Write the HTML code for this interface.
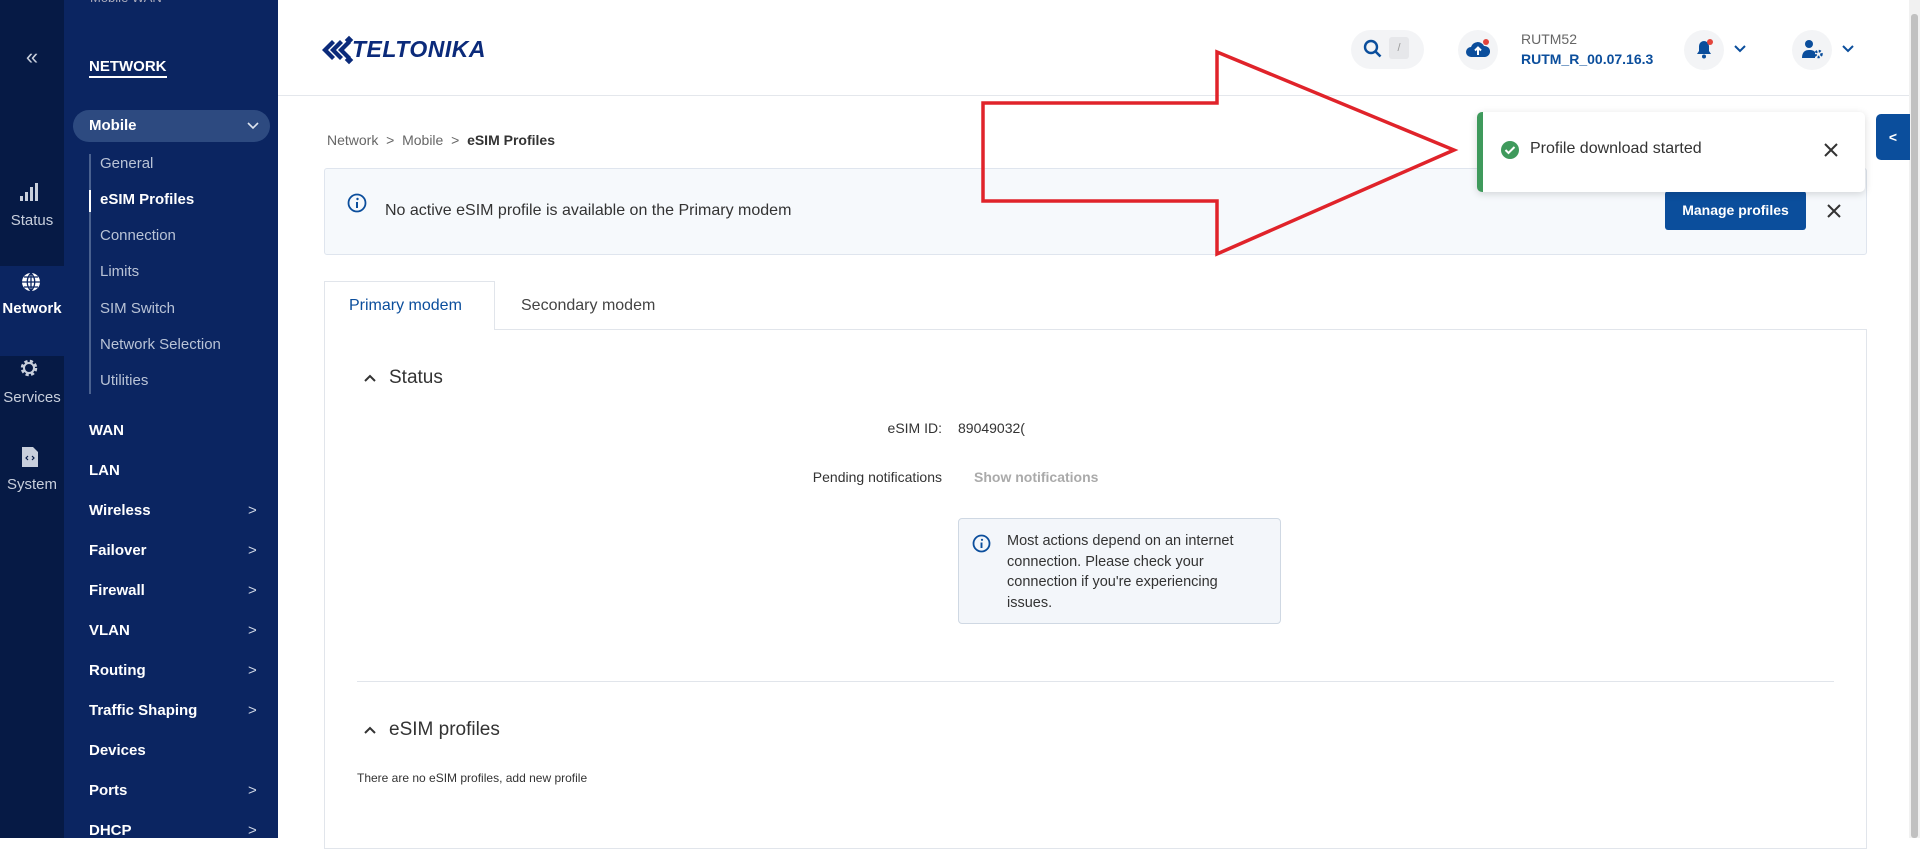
<!DOCTYPE html>
<html><head><meta charset="utf-8"><style>
*{margin:0;padding:0;box-sizing:border-box}
body{width:1920px;height:838px;overflow:hidden;background:#fff;font-family:"Liberation Sans",sans-serif;position:relative;color:#333}
.a{position:absolute;white-space:nowrap}
#rail{left:0;top:0;width:64px;height:838px;background:#061a45}
#panel{left:64px;top:0;width:214px;height:838px;background:#0b2561}
.rl{color:#c8cfdc;font-size:15px;width:64px;text-align:center;left:0}
.nv{left:89px;color:#fff;font-size:15px;font-weight:bold}
.sb{left:100px;color:#b9c3d6;font-size:15px}
.ch{left:248px;color:#cfd6e4;font-size:15px}
</style></head><body>
<div class="a" id="rail"></div>
<div class="a" style="left:0;top:266px;width:64px;height:90px;background:#0b2561"></div>
<div class="a" id="panel"></div>
<div class="a" style="left:90px;top:-10px;color:#aab;font-size:13px">Mobile WAN</div>
<div class="a rl" style="top:44px;font-size:22px;color:#c8cfdc">«</div>
<div class="a" style="left:89px;top:58px;color:#fff;font-size:15px;font-weight:bold;border-bottom:2px solid #fff;padding-bottom:1px">NETWORK</div>
<div class="a" style="left:73px;top:110px;width:197px;height:32px;border-radius:16px;background:#2d4a80"></div>
<div class="a nv" style="top:117px">Mobile</div>
<svg class="a" style="left:246px;top:121px" width="14" height="10"><path d="M2 2l5 5 5-5" stroke="#dfe5ef" stroke-width="1.6" fill="none"/></svg>
<div class="a" style="left:89px;top:154px;width:2px;height:240px;background:#4a618f"></div>
<div class="a" style="left:89px;top:190px;width:2px;height:22px;background:#fff"></div>
<div class="a sb" style="top:155px">General</div>
<div class="a sb" style="top:191px;color:#fff;font-weight:bold">eSIM Profiles</div>
<div class="a sb" style="top:227px">Connection</div>
<div class="a sb" style="top:263px">Limits</div>
<div class="a sb" style="top:300px">SIM Switch</div>
<div class="a sb" style="top:336px">Network Selection</div>
<div class="a sb" style="top:372px">Utilities</div>
<div class="a nv" style="top:422px">WAN</div>
<div class="a nv" style="top:462px">LAN</div>
<div class="a nv" style="top:502px">Wireless</div><div class="a ch" style="top:502px">&gt;</div>
<div class="a nv" style="top:542px">Failover</div><div class="a ch" style="top:542px">&gt;</div>
<div class="a nv" style="top:582px">Firewall</div><div class="a ch" style="top:582px">&gt;</div>
<div class="a nv" style="top:622px">VLAN</div><div class="a ch" style="top:622px">&gt;</div>
<div class="a nv" style="top:662px">Routing</div><div class="a ch" style="top:662px">&gt;</div>
<div class="a nv" style="top:702px">Traffic Shaping</div><div class="a ch" style="top:702px">&gt;</div>
<div class="a nv" style="top:742px">Devices</div>
<div class="a nv" style="top:782px">Ports</div><div class="a ch" style="top:782px">&gt;</div>
<div class="a nv" style="top:822px">DHCP</div><div class="a ch" style="top:822px">&gt;</div>
<!-- rail icons -->
<svg class="a" style="left:18px;top:182px" width="22" height="20"><rect x="2" y="14" width="3" height="5" fill="#c8cfdc"/><rect x="7" y="10" width="3" height="9" fill="#c8cfdc"/><rect x="12" y="5" width="3" height="14" fill="#c8cfdc"/><rect x="17" y="1" width="3" height="18" fill="#c8cfdc"/></svg>
<div class="a rl" style="top:212px">Status</div>
<svg class="a" style="left:20px;top:271px" width="22" height="22"><circle cx="11" cy="11" r="9" fill="#fff"/><path d="M2 11h18M11 2v18M4 6h14M4 16h14M11 2c-5 5-5 13 0 18M11 2c5 5 5 13 0 18" stroke="#0b2561" stroke-width="1.3" fill="none"/></svg>
<div class="a rl" style="top:300px;color:#fff;font-weight:bold">Network</div>
<svg class="a" style="left:18px;top:357px" width="22" height="22"><circle cx="11" cy="11" r="6.5" fill="none" stroke="#c8cfdc" stroke-width="3.5" stroke-dasharray="3 2.2"/><circle cx="11" cy="11" r="5" fill="none" stroke="#c8cfdc" stroke-width="2"/></svg>
<div class="a rl" style="top:389px">Services</div>
<svg class="a" style="left:21px;top:446px" width="18" height="22"><path d="M1 1h11l5 5v15H1z" fill="#c8cfdc"/><path d="M7 10l-2 2 2 2M11 10l2 2-2 2" stroke="#061a45" stroke-width="1.2" fill="none"/></svg>
<div class="a rl" style="top:476px">System</div>
<!-- header -->
<div class="a" style="left:278px;top:95px;width:1631px;height:1px;background:#e4e7ec"></div>
<svg class="a" style="left:320px;top:34px" width="60" height="32"><g fill="#0b2a7a"><path d="M2 16l10-10 3 3-7 7 7 7-3 3z"/><path d="M10 16l10-10 3 3-7 7 7 7-3 3z"/><path d="M18 16l10-10 3 3-7 7 7 7-3 3z"/><rect x="26" y="3" width="6" height="6" transform="rotate(45 29 6)"/><rect x="26" y="23" width="6" height="6" transform="rotate(45 29 26)"/></g></svg>
<div class="a" style="left:352px;top:36px;font-size:23px;font-weight:bold;font-style:italic;color:#0b2a7a;letter-spacing:0.5px">TELTONIKA</div>
<div class="a" style="left:1351px;top:30px;width:73px;height:39px;border-radius:20px;background:#f3f4f6"></div>
<svg class="a" style="left:1363px;top:39px" width="20" height="20"><circle cx="8" cy="8" r="6" stroke="#0b4e9c" stroke-width="2.4" fill="none"/><path d="M12.5 12.5l5 5" stroke="#0b4e9c" stroke-width="2.6"/></svg>
<div class="a" style="left:1389px;top:37px;width:20px;height:22px;background:#e6e7ea;border-radius:3px;color:#999;font-size:11px;text-align:center;line-height:22px">/</div>
<div class="a" style="left:1458px;top:30px;width:40px;height:40px;border-radius:20px;background:#f3f4f6"></div>
<svg class="a" style="left:1465px;top:38px" width="26" height="22"><path d="M6 19a5 5 0 010-10 7 7 0 0113-1 5 5 0 011 11z" fill="#0b4e9c"/><path d="M13 17v-7M10 12.5l3-3 3 3" stroke="#fff" stroke-width="2" fill="none"/><circle cx="21" cy="4" r="3" fill="#e2453c"/></svg>
<div class="a" style="left:1521px;top:31px;font-size:14px;color:#666">RUTM52</div>
<div class="a" style="left:1521px;top:51px;font-size:14px;color:#0b4e9c;font-weight:bold">RUTM_R_00.07.16.3</div>
<div class="a" style="left:1684px;top:30px;width:40px;height:40px;border-radius:20px;background:#f3f4f6"></div>
<svg class="a" style="left:1693px;top:37px" width="22" height="24"><path d="M4 17h14l-2-3V9a5 5 0 00-10 0v5z" fill="#0b4e9c"/><circle cx="11" cy="19.5" r="2" fill="#0b4e9c"/><circle cx="17" cy="5" r="3" fill="#e2453c"/></svg>
<svg class="a" style="left:1733px;top:44px" width="14" height="10"><path d="M2 2l5 5 5-5" stroke="#0b4e9c" stroke-width="2" fill="none"/></svg>
<div class="a" style="left:1792px;top:30px;width:40px;height:40px;border-radius:20px;background:#f3f4f6"></div>
<svg class="a" style="left:1801px;top:39px" width="24" height="22"><circle cx="8" cy="5" r="4" fill="#0b4e9c"/><path d="M1 19c0-6 3-8 7-8s5 1 6 2v6z" fill="#0b4e9c"/><circle cx="17.5" cy="15" r="3" fill="none" stroke="#0b4e9c" stroke-width="2.5" stroke-dasharray="2 1.5"/></svg>
<svg class="a" style="left:1841px;top:44px" width="14" height="10"><path d="M2 2l5 5 5-5" stroke="#0b4e9c" stroke-width="2" fill="none"/></svg>
<div class="a" style="left:1909px;top:0;width:11px;height:838px;background:#f1f1f1"></div>
<div class="a" style="left:1911px;top:14px;width:7px;height:824px;background:#c1c1c1;border-radius:3px"></div>
<!-- breadcrumb -->
<div class="a" style="left:327px;top:132px;font-size:14px;color:#666">Network &nbsp;&gt;&nbsp; Mobile &nbsp;&gt;&nbsp; <b style="color:#333">eSIM Profiles</b></div>
<!-- alert -->
<div class="a" style="left:324px;top:168px;width:1543px;height:87px;background:#f6f9fc;border:1px solid #dfe5ee;border-radius:3px"></div>
<svg class="a" style="left:347px;top:193px" width="20" height="20"><circle cx="10" cy="10" r="8.5" stroke="#0b4e9c" stroke-width="1.8" fill="none"/><circle cx="10.5" cy="6" r="1.2" fill="#0b4e9c"/><path d="M10 9v6" stroke="#0b4e9c" stroke-width="2"/></svg>
<div class="a" style="left:385px;top:202px;font-size:16px;color:#333">No active eSIM profile is available on the Primary modem</div>
<div class="a" style="left:1665px;top:191px;width:141px;height:39px;background:#0b4e9c;border-radius:3px;color:#fff;font-size:14px;font-weight:bold;text-align:center;line-height:39px">Manage profiles</div>
<svg class="a" style="left:1826px;top:203px" width="16" height="16"><path d="M2 2l12 12M14 2L2 14" stroke="#333" stroke-width="2"/></svg>
<!-- side tab -->
<div class="a" style="left:1876px;top:114px;width:34px;height:46px;background:#0b4e9c;border-radius:5px 0 0 5px;color:#fff;font-size:14px;font-weight:bold;line-height:46px;text-align:center">&lt;</div>
<!-- toast -->
<div class="a" style="left:1477px;top:112px;width:388px;height:80px;background:#fff;border-radius:5px;box-shadow:0 2px 8px rgba(0,0,0,.15);border-left:6px solid #3f9a5c"></div>
<svg class="a" style="left:1500px;top:140px" width="20" height="20"><circle cx="10" cy="10" r="9" fill="#3f9a5c"/><path d="M5.5 10l3 3 6-6" stroke="#fff" stroke-width="2" fill="none"/></svg>
<div class="a" style="left:1530px;top:140px;font-size:16px;color:#333">Profile download started</div>
<svg class="a" style="left:1823px;top:142px" width="16" height="16"><path d="M2 2l12 12M14 2L2 14" stroke="#333" stroke-width="2"/></svg>
<!-- tabs -->
<div class="a" style="left:324px;top:329px;width:1543px;height:520px;border:1px solid #e1e5eb"></div>
<div class="a" style="left:324px;top:281px;width:171px;height:49px;background:#fff;border:1px solid #e1e5eb;border-bottom:none"></div>
<div class="a" style="left:349px;top:297px;font-size:16px;color:#0b4e9c">Primary modem</div>
<div class="a" style="left:521px;top:297px;font-size:16px;color:#444">Secondary modem</div>
<svg class="a" style="left:363px;top:373px" width="14" height="10"><path d="M2 8l5-5 5 5" stroke="#333" stroke-width="2" fill="none"/></svg>
<div class="a" style="left:389px;top:367px;font-size:19px;color:#333">Status</div>
<div class="a" style="left:800px;top:420px;width:142px;text-align:right;font-size:14px;color:#333">eSIM ID:</div>
<div class="a" style="left:958px;top:420px;font-size:14px;color:#333">89049032(</div>
<div class="a" style="left:700px;top:469px;width:242px;text-align:right;font-size:14px;color:#333">Pending notifications</div>
<div class="a" style="left:974px;top:469px;font-size:14px;color:#aaa;font-weight:bold">Show notifications</div>
<div class="a" style="left:958px;top:518px;width:323px;height:106px;background:#f3f6fa;border:1px solid #cfd8e3;border-radius:4px"></div>
<svg class="a" style="left:972px;top:534px" width="19" height="19"><circle cx="9.5" cy="9.5" r="8" stroke="#0b4e9c" stroke-width="1.8" fill="none"/><circle cx="10" cy="5.8" r="1.1" fill="#0b4e9c"/><path d="M9.5 8.5v5.5" stroke="#0b4e9c" stroke-width="1.9"/></svg>
<div class="a" style="left:1007px;top:531px;font-size:14.5px;line-height:20.5px;color:#333;white-space:normal;width:236px">Most actions depend on an internet connection. Please check your connection if you're experiencing issues.</div>
<div class="a" style="left:357px;top:681px;width:1477px;height:1px;background:#e1e5eb"></div>
<svg class="a" style="left:363px;top:725px" width="14" height="10"><path d="M2 8l5-5 5 5" stroke="#333" stroke-width="2" fill="none"/></svg>
<div class="a" style="left:389px;top:719px;font-size:19px;color:#333">eSIM profiles</div>
<div class="a" style="left:357px;top:771px;font-size:12px;color:#333">There are no eSIM profiles, add new profile</div>
<!-- red arrow -->
<svg class="a" style="left:0;top:0" width="1920" height="838"><polygon points="983,103 1217,103 1217,52 1454,150 1217,254 1217,201 983,201" fill="none" stroke="#e0232a" stroke-width="3.5" stroke-linejoin="miter"/></svg>
</body></html>
